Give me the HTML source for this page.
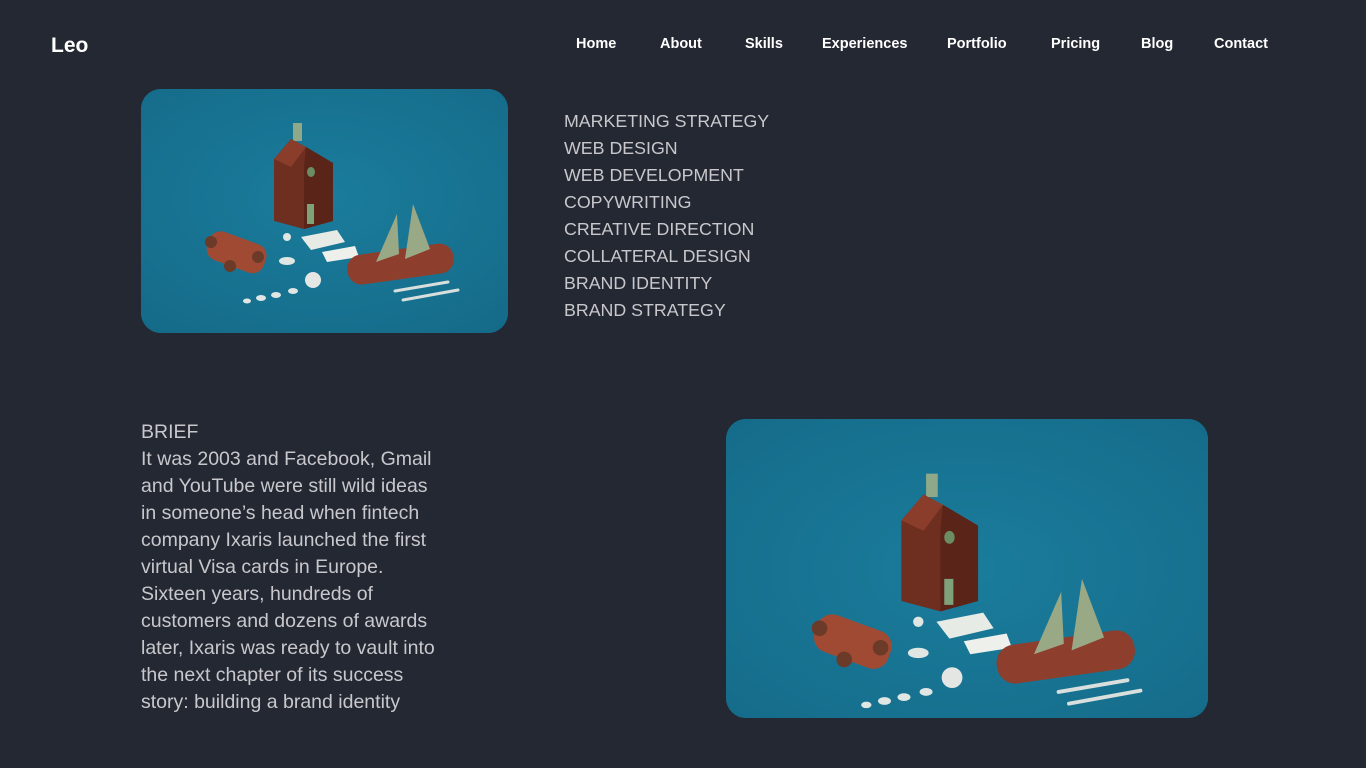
<!DOCTYPE html>
<html><head><meta charset="utf-8"><style>
*{margin:0;padding:0;box-sizing:border-box}
body{width:1366px;height:768px;background:#232833;font-family:"Liberation Sans",sans-serif;position:relative;overflow:hidden}
.logo{position:absolute;left:51px;top:34px;color:#fff;font-size:21px;font-weight:bold}
nav a{position:absolute;top:36px;color:#fff;font-size:14.5px;font-weight:bold;text-decoration:none}
.img{position:absolute;border-radius:20px;overflow:hidden;background:#17708e}
.txt{position:absolute;color:#c8c8cc;font-size:17.8px;line-height:27px}
</style></head><body>
<div class="logo">Leo</div>
<nav><a style="left:576px">Home</a><a style="left:660px">About</a><a style="left:745px">Skills</a><a style="left:822px">Experiences</a><a style="left:947px">Portfolio</a><a style="left:1051px">Pricing</a><a style="left:1141px">Blog</a><a style="left:1214px">Contact</a></nav>

<svg width="0" height="0" style="position:absolute"><defs>
<radialGradient id="bg" cx="50%" cy="45%" r="70%"><stop offset="0" stop-color="#1b7c9c"/><stop offset="1" stop-color="#126582"/></radialGradient>
<g id="scene">
<rect x="-80" y="-40" width="527" height="330" fill="url(#bg)"/>
<rect x="152" y="34" width="9" height="18" fill="#8fa88a"/>
<polygon points="133,70 150,50 165,58 192,74 192,132 163,140 133,132" fill="#6e2e20"/>
<polygon points="133,70 150,50 165,58 150,78" fill="#8a3d2a"/>
<polygon points="165,58 192,74 192,132 163,140 163,78" fill="#5a2419"/>
<rect x="166" y="115" width="7" height="20" fill="#7fa27a"/>
<ellipse cx="170" cy="83" rx="4" ry="5" fill="#6c8d64"/>
<g transform="rotate(20 95 162)"><rect x="66" y="148" width="60" height="30" rx="12" fill="#a14a33"/></g>
<circle cx="70" cy="153" r="6" fill="#6b3a28"/><circle cx="89" cy="177" r="6" fill="#6b3a28"/><circle cx="117" cy="168" r="6" fill="#6b3a28"/>
<polygon points="160,148 196,141 204,153 170,161" fill="#e6ebe6"/>
<polygon points="181,163 214,157 218,168 186,173" fill="#eef0ec"/>
<circle cx="146" cy="148" r="4" fill="#dfe6e3"/>
<circle cx="172" cy="191" r="8" fill="#e3e6e2"/>
<ellipse cx="146" cy="172" rx="8" ry="4" fill="#dfe6e3"/>
<ellipse cx="106" cy="212" rx="4" ry="2.5" fill="#dfe6e3"/><ellipse cx="120" cy="209" rx="5" ry="3" fill="#dfe6e3"/><ellipse cx="135" cy="206" rx="5" ry="3" fill="#dfe6e3"/><ellipse cx="152" cy="202" rx="5" ry="3" fill="#dfe6e3"/>
<rect x="206" y="160" width="107" height="30" rx="14" fill="#8e3e2c" transform="rotate(-8 260 175)"/>
<polygon points="235,173 256,125 258,165" fill="#9aa985"/>
<polygon points="264,170 272,115 289,160" fill="#9aa985"/>
<line x1="254" y1="202" x2="307" y2="193" stroke="#d8dfdc" stroke-width="3" stroke-linecap="round"/>
<line x1="262" y1="211" x2="317" y2="201" stroke="#d8dfdc" stroke-width="3" stroke-linecap="round"/>
</g></defs></svg>

<div class="img" style="left:141px;top:89px;width:367px;height:244px"><svg width="367" height="244" viewBox="0 0 367 244"><use href="#scene"/></svg></div>
<div class="img" style="left:726px;top:419px;width:482px;height:299px"><svg width="482" height="299" viewBox="-2 -8 371 230"><use href="#scene"/></svg></div>

<div class="txt" style="left:564px;top:108px">MARKETING STRATEGY<br>WEB DESIGN<br>WEB DEVELOPMENT<br>COPYWRITING<br>CREATIVE DIRECTION<br>COLLATERAL DESIGN<br>BRAND IDENTITY<br>BRAND STRATEGY</div>
<div class="txt" style="left:141px;top:419px;font-size:19.5px;white-space:nowrap">BRIEF<br>It was 2003 and Facebook, Gmail<br>and YouTube were still wild ideas<br>in someone’s head when fintech<br>company Ixaris launched the first<br>virtual Visa cards in Europe.<br>Sixteen years, hundreds of<br>customers and dozens of awards<br>later, Ixaris was ready to vault into<br>the next chapter of its success<br>story: building a brand identity</div>
</body></html>
